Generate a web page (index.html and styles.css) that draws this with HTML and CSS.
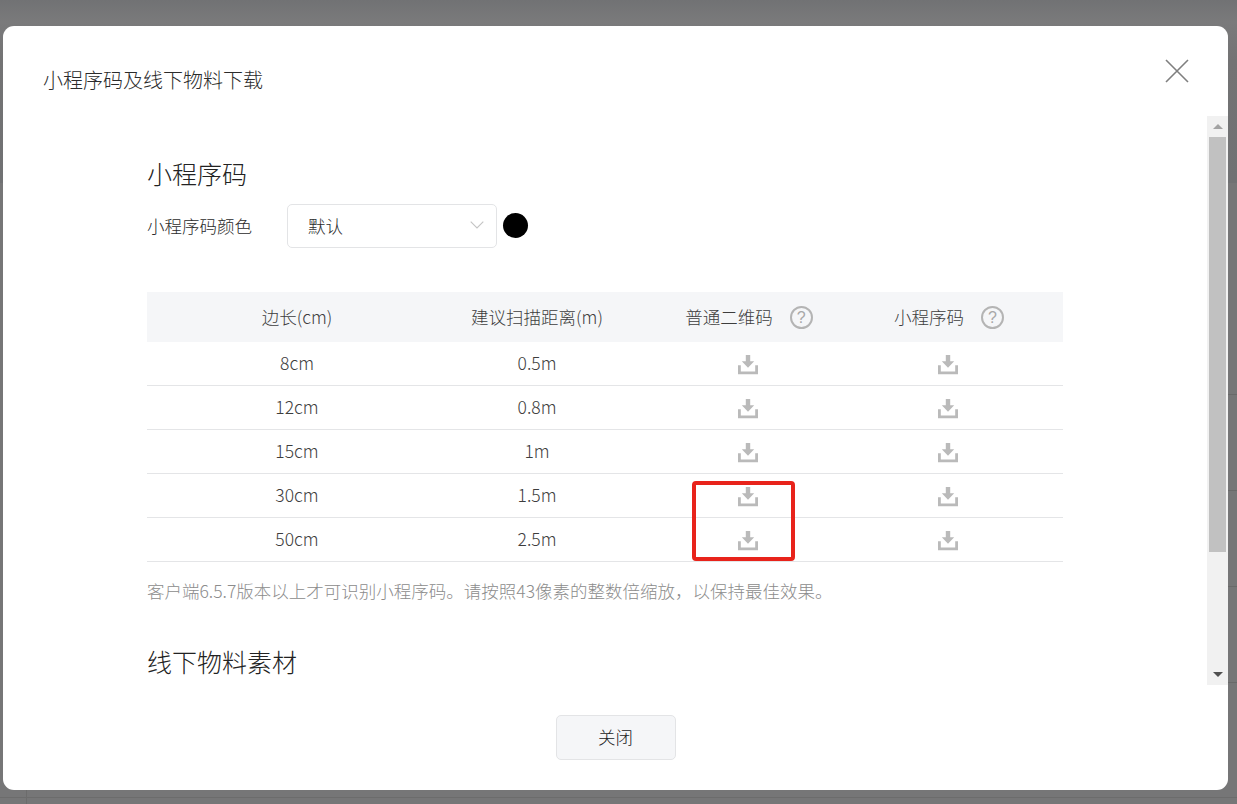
FILE: index.html
```html
<!DOCTYPE html>
<html lang="zh-CN">
<head>
<meta charset="utf-8">
<title>小程序码及线下物料下载</title>
<link rel="stylesheet" href="styles.css">
</head>
<body>
<div class="backdrop">
  <div class="modal">
    <header class="modal-head">
      <h2 class="modal-title">小程序码及线下物料下载</h2>
      <button class="close" aria-label="关闭">
        <svg width="24" height="24" viewBox="0 0 24 24"><path d="M1 1 23 23M23 1 1 23" stroke="#7f7f7f" stroke-width="1.6" fill="none"/></svg>
      </button>
    </header>
    <div class="modal-body">
      <div class="content">
        <h3 class="section-title">小程序码</h3>
        <div class="color-row">
          <span class="color-label">小程序码颜色</span>
          <div class="select">
            <span>默认</span>
            <svg width="14" height="8" viewBox="0 0 14 8"><path d="M.7.7 7 7 13.3.7" stroke="#c4c4c4" stroke-width="1.1" fill="none"/></svg>
          </div>
          <span class="swatch"></span>
        </div>
        <div class="table">
          <div class="row head">
            <div class="cell">边长(cm)</div>
            <div class="cell">建议扫描距离(m)</div>
            <div class="cell with-help">普通二维码<span class="help">?</span></div>
            <div class="cell with-help">小程序码<span class="help">?</span></div>
          </div>
          <div class="row">
            <div class="cell">8cm</div><div class="cell">0.5m</div>
            <div class="cell"><svg class="dl" viewBox="0 0 20 20"><path d="M7.800 0h4.400v6.200h4L10 12.800 3.800 6.200h4zM0 10.200h2.800v6.200h14.400v-6.200H20V19.200H0z"/></svg></div>
            <div class="cell"><svg class="dl" viewBox="0 0 20 20"><path d="M7.800 0h4.400v6.200h4L10 12.800 3.800 6.200h4zM0 10.200h2.800v6.200h14.400v-6.200H20V19.200H0z"/></svg></div>
          </div>
          <div class="row">
            <div class="cell">12cm</div><div class="cell">0.8m</div>
            <div class="cell"><svg class="dl" viewBox="0 0 20 20"><path d="M7.800 0h4.400v6.200h4L10 12.800 3.800 6.200h4zM0 10.200h2.800v6.200h14.400v-6.200H20V19.200H0z"/></svg></div>
            <div class="cell"><svg class="dl" viewBox="0 0 20 20"><path d="M7.800 0h4.400v6.200h4L10 12.800 3.800 6.200h4zM0 10.200h2.800v6.200h14.400v-6.200H20V19.200H0z"/></svg></div>
          </div>
          <div class="row">
            <div class="cell">15cm</div><div class="cell">1m</div>
            <div class="cell"><svg class="dl" viewBox="0 0 20 20"><path d="M7.800 0h4.400v6.200h4L10 12.800 3.800 6.200h4zM0 10.200h2.800v6.200h14.400v-6.200H20V19.200H0z"/></svg></div>
            <div class="cell"><svg class="dl" viewBox="0 0 20 20"><path d="M7.800 0h4.400v6.200h4L10 12.800 3.800 6.200h4zM0 10.200h2.800v6.200h14.400v-6.200H20V19.200H0z"/></svg></div>
          </div>
          <div class="row">
            <div class="cell">30cm</div><div class="cell">1.5m</div>
            <div class="cell"><svg class="dl" viewBox="0 0 20 20"><path d="M7.800 0h4.400v6.200h4L10 12.800 3.800 6.200h4zM0 10.200h2.800v6.200h14.400v-6.200H20V19.200H0z"/></svg></div>
            <div class="cell"><svg class="dl" viewBox="0 0 20 20"><path d="M7.800 0h4.400v6.200h4L10 12.800 3.800 6.200h4zM0 10.200h2.800v6.200h14.400v-6.200H20V19.200H0z"/></svg></div>
          </div>
          <div class="row">
            <div class="cell">50cm</div><div class="cell">2.5m</div>
            <div class="cell"><svg class="dl" viewBox="0 0 20 20"><path d="M7.800 0h4.400v6.200h4L10 12.800 3.800 6.200h4zM0 10.200h2.800v6.200h14.400v-6.200H20V19.200H0z"/></svg></div>
            <div class="cell"><svg class="dl" viewBox="0 0 20 20"><path d="M7.800 0h4.400v6.200h4L10 12.800 3.800 6.200h4zM0 10.200h2.800v6.200h14.400v-6.200H20V19.200H0z"/></svg></div>
          </div>
          <div class="highlight"></div>
        </div>
        <p class="note">客户端6.5.7版本以上才可识别小程序码。请按照43像素的整数倍缩放，以保持最佳效果。</p>
        <h3 class="section-title offline">线下物料素材</h3>
      </div>
      <div class="scrollbar">
        <span class="arrow up"></span>
        <span class="thumb"></span>
        <span class="track"></span>
        <span class="arrow down"></span>
      </div>
    </div>
    <footer class="modal-foot">
      <button class="btn">关闭</button>
    </footer>
  </div>
</div>
</body>
</html>
```
FILE: styles.css
```css
* { box-sizing: border-box; }
html, body { margin: 0; height: 100%; }
body {
  font-family: "Noto Sans CJK SC", "Liberation Sans", sans-serif;
  font-weight: 300;
  color: #222;
  overflow: hidden;
}
.backdrop {
  width: 1237px;
  height: 804px;
  padding: 26px 9px 14px 3px;
  background-color: #767677;
  background-image:
    linear-gradient(#717274 0, #7a7a7b 22px, #737374 60px, #707173 183px, transparent 183px),
    linear-gradient(#696969, #696969),
    linear-gradient(#696969, #696969),
    linear-gradient(#696969, #696969),
    linear-gradient(#696969, #696969),
    linear-gradient(#696969, #696969),
    linear-gradient(#6c6c6c, #6c6c6c),
    linear-gradient(#6c6c6c, #6c6c6c);
  background-repeat: no-repeat;
  background-size:
    100% 183px,
    9px 1px,
    9px 1px,
    9px 1px,
    9px 1px,
    9px 1px,
    100% 1px,
    1px 14px;
  background-position:
    0 0,
    1228px 133px,
    1228px 394px,
    1228px 490px,
    1228px 586px,
    1228px 682px,
    0 797px,
    26px 790px;
}
.modal {
  width: 1225px;
  height: 764px;
  background: #fff;
  border-radius: 11px;
  display: flex;
  flex-direction: column;
  overflow: hidden;
}
.modal-head {
  height: 90px;
  flex: none;
  display: flex;
  justify-content: space-between;
  padding: 0 39px 0 40px;
}
.modal-title {
  margin: 39px 0 0;
  font-size: 20px;
  line-height: 30px;
  font-weight: 300;
  color: #2b2b2b;
}
.close {
  margin: 33px 0 0;
  padding: 0;
  width: 24px;
  height: 24px;
  border: 0;
  background: none;
  display: block;
}
.close svg { display: block; }
.modal-body {
  height: 569px;
  flex: none;
  display: flex;
}
.content {
  flex: 1;
  min-width: 0;
  padding: 0 0 0 144px;
  overflow: hidden;
}
.section-title {
  margin: 38px 0 0;
  font-size: 25px;
  line-height: 38px;
  font-weight: 300;
  color: #222;
}
.color-row {
  display: flex;
  align-items: center;
  margin-top: 12px;
  height: 44px;
}
.color-label {
  width: 140px;
  font-size: 17.5px;
  color: #2b2b2b;
  padding-bottom: 2px;
}
.select {
  width: 210px;
  height: 44px;
  border: 1px solid #e3e4e6;
  border-radius: 5px;
  display: flex;
  align-items: center;
  justify-content: space-between;
  padding: 0 12px 2px 20px;
  font-size: 17.5px;
  color: #2b2b2b;
}
.swatch {
  width: 25px;
  height: 25px;
  border-radius: 50%;
  background: #000;
  margin-left: 6px;
  margin-bottom: 2px;
}
.table {
  position: relative;
  width: 916px;
  margin-top: 44px;
}
.row {
  display: grid;
  grid-template-columns: 300px 180px 242px 158px;
  height: 44px;
  border-bottom: 1px solid #e4e5e7;
  font-size: 17.5px;
  color: #3d3d3d;
}
.row.head {
  height: 50px;
  border-bottom: 0;
  background: #f5f6f8;
}
.cell {
  display: flex;
  align-items: center;
  justify-content: center;
  padding-bottom: 2px;
}
.cell.with-help { padding: 0 0 2px 2px; }
.help {
  width: 23px;
  height: 23px;
  margin-left: 17px;
  margin-top: 2px;
  border: 2px solid #b4b4b4;
  border-radius: 50%;
  color: #a8a8a8;
  font-size: 16px;
  line-height: 19px;
  text-align: center;
  font-family: "Liberation Sans", sans-serif;
}
.dl {
  width: 20px;
  height: 20px;
  fill: #bababa;
  margin-top: 5px;
}
.highlight {
  position: absolute;
  left: 545px;
  top: 189px;
  width: 103px;
  height: 80px;
  border: 4px solid #e8231b;
  border-radius: 4px;
}
.note {
  margin: 14px 0 0;
  font-size: 17.5px;
  line-height: 30px;
  color: #8c8c8c;
}
.section-title.offline { margin-top: 36px; }
.scrollbar {
  width: 21px;
  flex: none;
  display: flex;
  flex-direction: column;
  align-items: center;
  background: #f1f1f1;
}
.arrow {
  flex: none;
  height: 21px;
  width: 21px;
  display: flex;
  align-items: center;
  justify-content: center;
}
.arrow::before {
  content: "";
  border-left: 5px solid transparent;
  border-right: 5px solid transparent;
}
.arrow.up::before { border-bottom: 5px solid #a3a3a3; }
.arrow.down::before { border-top: 5px solid #505050; }
.thumb {
  flex: none;
  width: 17px;
  height: 415px;
  background: #c1c1c1;
}
.track { flex: 1; }
.modal-foot {
  flex: 1;
  display: flex;
  justify-content: center;
  padding-top: 30px;
}
.btn {
  width: 120px;
  height: 45px;
  border: 1px solid #e3e4e6;
  border-radius: 5px;
  background: #f5f6f8;
  font: inherit;
  font-size: 17.5px;
  color: #222;
  padding: 0 0 2px;
}
```
